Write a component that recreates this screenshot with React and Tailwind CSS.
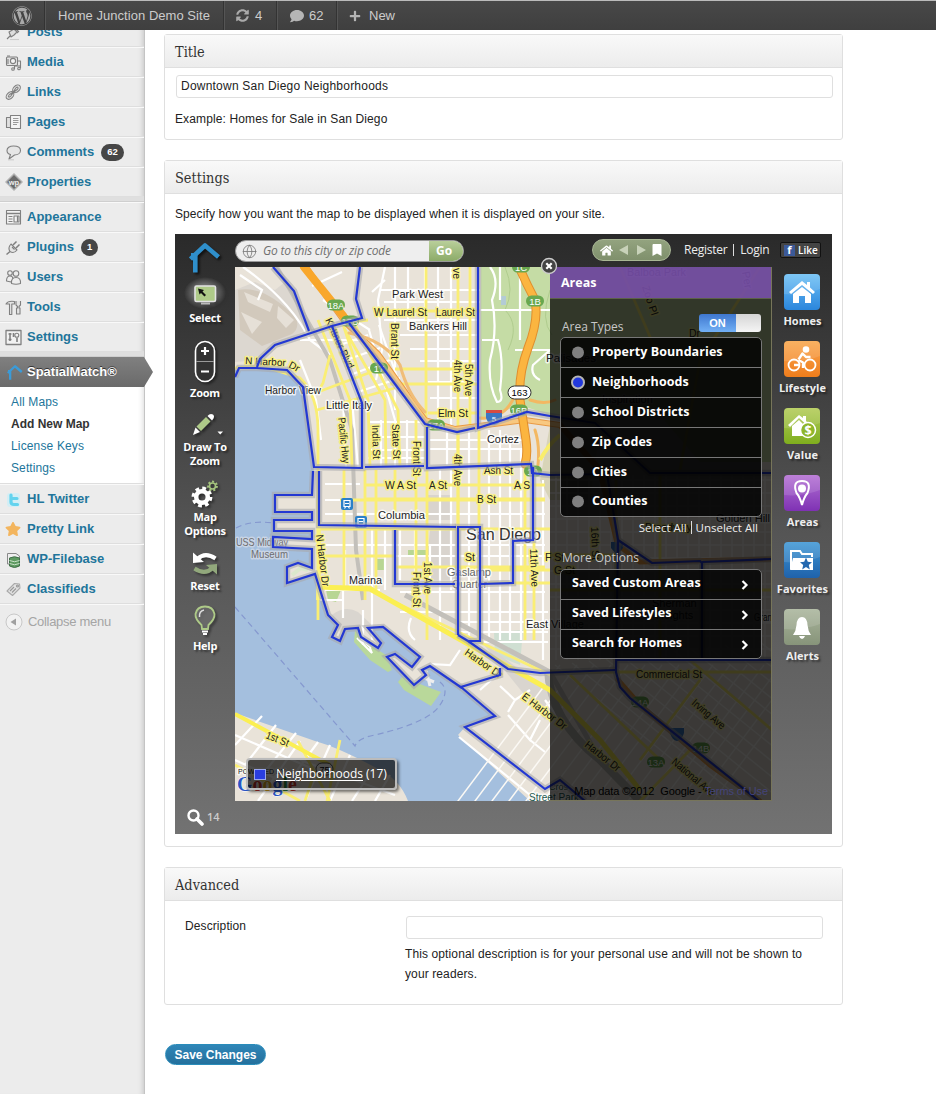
import React from "react";
import { FaWordpress, FaSyncAlt, FaComment, FaPlus, FaHome, FaBookmark, FaStar } from "react-icons/fa";
import { Globe } from "lucide-react";

function HouseLogo({ size, color, className }) {
  return (
    <svg width={size} height={size} viewBox="0 0 32 32" className={className} fill="none" stroke={color}>
      <path d="M6.300 31.500V13" strokeWidth="4.600" />
      <path d="M1.500 18L16 4.500L29.500 16" strokeWidth="4.600" strokeLinejoin="round" />
      <path d="M2 13.500H6" strokeWidth="3" />
    </svg>
  );
}

/* ---------- sidebar ---------- */

function MenuRow({ icon, label, badge }) {
  return (
    <div className="flex h-[30px] items-center border-t border-b border-t-[#f9f9f9] border-b-[#dedede] pl-[5px]">
      <span className="flex w-[22px] items-center text-[#7c7c7c]">{icon}</span>
      <span className="text-[13px] leading-[18px] font-bold text-[#21759b]">{label}</span>
      {badge && (
        <span className="ml-[7px] flex h-[17px] min-w-[17px] items-center justify-center rounded-full bg-[#464646] px-[6px] text-[9.5px] font-bold text-white">{badge}</span>
      )}
    </div>
  );
}

const Divider = () => <div className="h-[5px] border-b border-[#cfcfcf] bg-[#dfdfdf]" />;

const Glyph = ({ children }) => (
  <svg width="17" height="17" viewBox="0 0 17 17" fill="none" stroke="#808080" strokeWidth="1.100" strokeLinejoin="round">{children}</svg>
);

const ICONS = {
  posts: <Glyph><path d="M8 4L13 9M9 3L14 8M12 8L9 11L6 13L4 8L9 5M6 11L2 15" fill="#ddd" /><path d="M5 15.500H14" stroke="#ccc" /></Glyph>,
  media: <Glyph><rect x="1.500" y="3" width="11" height="8.500" rx="1" fill="#e4e4e4" /><circle cx="8" cy="7" r="2.600" fill="#f4f4f4" /><path d="M3 5V10M2 2H5" /><path d="M9.500 15V11.500M15.500 14V7H13" /><circle cx="8" cy="15" r="1.300" /><circle cx="14" cy="14.500" r="1.300" /><path d="M9.500 12H15" /></Glyph>,
  links: <Glyph><ellipse cx="11.500" cy="4.800" rx="4.500" ry="3" transform="rotate(-45 11.500 4.800)" fill="#e0e0e0" /><ellipse cx="11.500" cy="4.800" rx="2" ry="1" transform="rotate(-45 11.500 4.800)" fill="#f6f6f6" /><ellipse cx="5" cy="11.500" rx="4.500" ry="3" transform="rotate(-45 5 11.500)" fill="#e0e0e0" /><ellipse cx="5" cy="11.500" rx="2" ry="1" transform="rotate(-45 5 11.500)" fill="#f6f6f6" /><path d="M6 10.500L10.500 6" strokeWidth="2.200" /></Glyph>,
  pages: <Glyph><path d="M6 13.500H1.500V3.500H5" fill="#e0e0e0" /><rect x="5.500" y="1.500" width="10" height="13" fill="#f4f4f4" /><path d="M8 4.500H13.500M8 6.500H13.500M8 8.500H13.500M8 10.500H12" stroke="#999" /></Glyph>,
  comments: <Glyph><path d="M8.500 2C13 2 15.500 4 15.500 6.500C15.500 9 13 11 9.500 11L4 15L5.500 10.500C3 10 2 8.500 2 6.500C2 4 4.500 2 8.500 2Z" fill="#e6e6e6" /><path d="M3 15.800H9" stroke="#ccc" /></Glyph>,
  appearance: <Glyph><rect x="1.500" y="1.500" width="14" height="13.500" fill="#f2f2f2" /><path d="M1.500 4.500H15.500" strokeWidth="1.500" /><path d="M3.500 7.500H7.500M3.500 10H7.500M3.500 12.500H7.500M12.500 7V13" strokeWidth="1.200" /><rect x="9" y="7" width="5" height="6" /></Glyph>,
  plugins: <Glyph><path d="M6 5L12 11Q9 15 5 12.500Q2.500 9 6 5Z" fill="#e4e4e4" /><path d="M8 6L11.500 2.500M11 9L14.500 5.500M5 12.500L1.500 15.500" strokeWidth="1.500" /><path d="M7 8L9.500 10.500" /></Glyph>,
  users: <Glyph><circle cx="5" cy="4" r="2.300" fill="#eee" /><path d="M1.500 12Q1.500 7 5 7Q8 7 8 10L6 13Z" fill="#eee" /><circle cx="11" cy="4.500" r="2.800" fill="#eee" /><path d="M6.500 14.500Q6 8.500 11 8.500Q16 8.500 15.500 14.500Q11 16 6.500 14.500Z" fill="#eee" /></Glyph>,
  tools: <Glyph><path d="M1 5Q3 1.500 9.500 2.500V5H6.800V15.500H4.500V5Z" fill="#e4e4e4" /><path d="M11 2V6L12.500 7.500V9H11.500V15H15V9H14V7.500L15.500 6V2" fill="#e4e4e4" /></Glyph>,
  settings: <Glyph><rect x="1" y="1.500" width="15" height="14" fill="#f2f2f2" strokeWidth="1.300" /><path d="M5 4V12M3.500 10.500H6.500M12 9V13M8.500 4V8" strokeWidth="1.600" /><circle cx="11.800" cy="6.300" r="2" /><path d="M3.500 5H6.500" strokeWidth="1.500" /></Glyph>,
  twitter: <svg width="17" height="17" viewBox="0 0 17 17"><rect x="2" y="2" width="13" height="14" rx="3" fill="#d3eef5" /><path d="M6 4V11Q6 13.500 9 13.500H12.500M6 7.500H12" fill="none" stroke="#63d3ee" strokeWidth="3.200" strokeLinecap="round" /></svg>,
  filebase: <svg width="17" height="17" viewBox="0 0 17 17"><path d="M2.500 13V2.500H11L14.500 5V13Z" fill="#eee" stroke="#888" /><path d="M4.500 7V15Q9.500 18 14.500 15V7Q9.500 4.500 4.500 7Z" fill="#5d9a60" stroke="#41704a" /><path d="M4.500 9.500Q9.500 12 14.500 9.500M4.500 12.500Q9.500 15 14.500 12.500" fill="none" stroke="#c8e0c8" /></svg>,
  tag: <Glyph><path d="M2 10L9.500 2.500L14.500 3L15 7L7.500 14.500Z" fill="#e2e2e2" stroke="#aaa" /><path d="M5 10L9 6M7 11.500L11 7.500" stroke="#999" /><circle cx="12.500" cy="5" r="1" stroke="#999" /></Glyph>,
};

function Sidebar() {
  return (
    <aside className="relative w-[145px] shrink-0 overflow-visible border-r border-[#c4c4c4] bg-[#ececec] shadow-[inset_-6px_0_6px_-6px_rgba(0,0,0,0.22)]">
      <div className="-mt-[13px]">
        <MenuRow icon={ICONS.posts} label="Posts" />
        <MenuRow icon={ICONS.media} label="Media" />
        <MenuRow icon={ICONS.links} label="Links" />
        <MenuRow icon={ICONS.pages} label="Pages" />
        <MenuRow icon={ICONS.comments} label="Comments" badge="62" />
        <MenuRow
          icon={
            <svg width="18" height="18" viewBox="0 0 18 18">
              <path d="M0 9L9 0L18 9L9 18Z" fill="#b0b0b0" />
              <path d="M9 2L16 9L9 16L2 9Z" fill="#6a6a6a" />
              <text x="9" y="11.500" fontSize="7.500" fill="#eee" textAnchor="middle" fontFamily="Liberation Sans" fontWeight="bold">wp</text>
            </svg>
          }
          label="Properties"
        />
        <Divider />
        <MenuRow icon={ICONS.appearance} label="Appearance" />
        <MenuRow icon={ICONS.plugins} label="Plugins" badge="1" />
        <MenuRow icon={ICONS.users} label="Users" />
        <MenuRow icon={ICONS.tools} label="Tools" />
        <MenuRow icon={ICONS.settings} label="Settings" />
        <Divider />
      </div>
      <div className="relative z-10 flex h-[30px] items-center bg-gradient-to-b from-[#808080] to-[#6a6a6a] pl-[7px]">
        <HouseLogo size={16} color="#3b9bd8" className="shrink-0" />
        <span className="ml-1 text-[13px] font-bold text-white [text-shadow:0_-1px_0_#333]">SpatialMatch®</span>
        <svg width="10" height="30" viewBox="0 0 10 30" className="absolute top-0 left-full">
          <defs><linearGradient id="arrow" x2="0" y2="1"><stop stopColor="#808080" /><stop offset="1" stopColor="#6a6a6a" /></linearGradient></defs>
          <path d="M0 0L9 15L0 30Z" fill="url(#arrow)" />
        </svg>
      </div>
      <div className="flex h-[97px] flex-col border-b border-[#dedede] bg-white pt-[4px] pl-[11px] text-[12px] leading-[22px] text-[#21759b] shadow-[inset_-6px_0_6px_-6px_rgba(0,0,0,0.2)]">
        <span className="tracking-[0.15px]">All Maps</span>
        <span className="font-bold text-[#333]">Add New Map</span>
        <span className="tracking-[0.15px]">License Keys</span>
        <span className="tracking-[0.1px]">Settings</span>
      </div>
      <MenuRow icon={ICONS.twitter} label="HL Twitter" />
      <MenuRow icon={<FaStar size={16} color="#f3b55e" />} label="Pretty Link" />
      <MenuRow icon={ICONS.filebase} label="WP-Filebase" />
      <MenuRow icon={ICONS.tag} label="Classifieds" />
      <div className="flex h-[34px] items-center border-t border-[#f9f9f9] pl-[5px]">
        <svg width="18" height="18" viewBox="0 0 18 18"><circle cx="9" cy="9" r="8" fill="#f2f2f2" stroke="#c8c8c8" /><path d="M11 5.500V12.500L5.500 9Z" fill="#a0a0a0" /></svg>
        <span className="ml-[5px] text-[13px] tracking-[-0.3px] text-[#a5a5a5]">Collapse menu</span>
      </div>
    </aside>
  );
}

/* ---------- map ---------- */

const WATER =
  "M235 370L258 369L286 371L303 386L309 430L314 467L312 495L275 495L275 511L312 512L312 520L274 521L274 531L312 531L312 539L273 537L273 548L312 549L312 568L298 563L287 567L287 583L314 574L328 615L337 625L332 637L340 641L345 629L358 628L361 637L378 648L381 643L368 628L383 627L420 657L412 667L395 654L387 657L414 685L426 675L422 670L430 666L461 687L495 716L465 727L458 735L530 801L408 801Q400 780 380 770Q340 748 315 741L235 713Z";

const WHITE = [
  "M395 267V410M408 267V330M425 267V330M438 267V420M451 267V425M470 267V425M380 290L480 290M384 302H480M384 320H478M400 335H478M410 349H478M420 361H478M428 382H478M430 398H478",
  "M372 340H300M480 310H550M482 340H498Q504 360 500 390Q504 402 497 402Q488 385 490 360Q498 330 492 300Q500 280 490 267",
  "M440 470V640M447 428V465M451 470V590M469 430V640M489 430V640M500 430V640M510 440V640M521 450V640M543 480V660",
  "M325 500H545M325 514H545M325 545H545M325 556H545M400 567H545M400 592H545M400 612H548M460 622H548M460 632H548M484 642H548M430 449H525M430 440H525M325 484H360",
  "M320 545H395M345 550V590M372 530V640M385 530V590M325 590H380M343 590V618M363 610V645M400 530V580M415 530V580M430 545V585M320 600L343 600",
  "M240 275L262 290L258 300M300 360L316 400L321 440M343 400L346 467M352 400L358 467M323 300L370 330M312 286L342 272M340 345L368 335M346 360L380 348M350 375L390 360M358 392L400 378M369 330L395 420M379 325L405 400M330 320L362 408",
  "M243 267Q290 300 310 340L330 355M385 267L378 300L382 350L376 380M385 280L372 292",
  "M368 422H425M368 437H425M368 450H425M368 458H425M381 420V467M395 420V467M407 420V467",
  "M411 618Q405 632 415 640M430 664L450 665L460 650M500 686L515 700L530 690M515 700L508 712M480 690L500 672M508 715L530 740L540 720M530 740L545 752M459 737L530 795M545 700L560 720",
  "M235 745L262 716M245 765L276 725M262 775L296 733M290 780L318 742M235 735L320 772M235 760L290 785M258 801L300 741M305 801L330 745M330 801L350 755M352 801L372 770M375 801L390 775M300 760L395 795",
  "M520 267V340M500 267V300M540 380Q530 375 533 365L550 350M515 350H550",
];

const YELLOW = [
  "M426 267V465M458 267V640M470 267V425M235 368L262 366L300 378Q318 395 318 430V620M368 320L350 322M374 311H480M395 369H478M390 384H478",
  "M428 413H480M344 470V590M365 470V600M376 470V590M416 420V600M427 470V640M458 430V640M479 430V640M365 485H545M340 500H545M365 499H545M320 529H550M320 556H395M395 567H545M460 570H550M460 583H550M318 587H370L390 600L550 675",
  "M330 355L323 383L318 392M318 392L390 365M317 410L395 388M335 300L368 400L370 467M345 330L385 400L386 467M355 325L398 410L400 467M318 320L350 400L352 467",
  "M427 440V465M525 430V640M534 540V640M395 470V530",
  "M235 714L320 760M298 741L330 801M235 765L300 801M312 780L305 801M340 740L327 801",
];

function Txt({ x, y, s = 11, r, o, c = "#222", halo = "#fff", children, len }) {
  return (
    <text x={x} y={y} fontSize={s} fill={c} textLength={len} lengthAdjust="spacingAndGlyphs"
      transform={r ? `rotate(${r} ${x} ${y})` : undefined} stroke={halo} strokeWidth={halo === "none" ? 0 : 3} strokeOpacity={o || 0.75} paintOrder="stroke" strokeLinejoin="round">
      {children}
    </text>
  );
}

const BORDERS = [
  "M273 267L294 291L309 331",
  "M235 377L239 368L257 368L287 370L303 387L314 467L362 468V403L332 326L275 345L260 359L257 367",
  "M332 326L362 318L356 299L360 267",
  "M349 323L425 424L457 432L475 428",
  "M478 267V428L527 412L550 416L595 423L650 473H772",
  "M365 467L424 466",
  "M427 427V468L531 464L532 473L550 475L607 474L618 540L652 563L700 561L702 563V660",
  "M313 471L312 495H275V512H312V520H274V531H312V539L273 537V547L312 549V568L298 563L287 567V583L315 574L328 615L338 625L332 637L340 641L345 629L358 628L361 637L378 648L381 643L368 628L383 627L420 657L412 667L395 654L387 657L414 685L426 675L422 670L430 666L462 688",
  "M319 471V525L456 527",
  "M458 635V527H480V641H468",
  "M395 530V584L455 584",
  "M481 584L513 583V541L533 540V467",
  "M458 635L468 641L508 669L540 673L615 670",
  "M500 668V675L461 687L495 716L465 727L545 789L560 780L585 801",
  "M618 540L616 672L620 687L630 698L759 801",
  "M702 562L772 559M616 660H772",
];

const Exit = ({ x, y, children }) => (
  <g><rect x={x - 9} y={y - 5.5} width="18" height="11" rx="5.5" fill="#69a84f" /><text x={x} y={y + 3.5} fontSize="9.5" fill="#fff" textAnchor="middle">{children}</text></g>
);

const Train = ({ x, y }) => (
  <g transform={`translate(${x} ${y})`}><rect width="12" height="12" rx="2" fill="#2b80c8" /><path d="M3 2.5H9V8.5H3ZM3.5 10.5L4.5 9M8.5 10.5L7.5 9" stroke="#fff" fill="none" strokeWidth="1.2" /><path d="M4 5.5H8" stroke="#fff" /></g>
);

function MapCanvas() {
  const diag = [];
  for (let i = 0; i < 16; i++) {
    diag.push(`M${560 + i * 17} 665L${440 + i * 17} 825`);
    diag.push(`M${555 + i * 17} ${665 - i * 2}L${760 + i * 17} ${830 - i * 2}`);
  }
  const east = [];
  for (let i = 0; i < 20; i++) {
    east.push(`M${556 + i * 11} 475V660`);
    if (i < 14) east.push(`M550 ${480 + i * 13}H772`);
  }
  return (
    <svg width="537" height="534" viewBox="235 267 537 534" className="block" fontFamily="Liberation Sans, Arial, sans-serif">
      <rect x="235" y="267" width="537" height="534" fill="#e9e3d9" />
      <path d="M235 290L255 282L275 290L285 282L300 310L306 330L275 345L258 360L235 362Z" fill="#dcd7d0" />
      <path d="M238 290Q265 285 296 318Q300 328 292 334L262 346L240 330Z" fill="#d2c9bc" />
      <path d="M244 292L273 304L270 312L248 302ZM241 312L262 322L252 334ZM278 306L294 320L286 328L277 318Z" fill="#e6e0d7" />
      <path d="M481 267H772V462H700L660 415H550L520 405L481 420Z" fill="#c5dca5" />
      <path d="M505 267Q515 290 505 310Q520 325 508 350M550 290Q540 320 552 335" fill="none" stroke="#b0cc8e" />
      <rect x="501" y="296" width="5" height="9" fill="#b3cbd5" />
      <path d="M550 425L540 480L550 500H590L600 430Z" fill="#d8d4b8" />
      <path d="M430 530H455V580H425ZM428 495H452V520H428Z" fill="#d9d4ce" />
      <path d="M376 559H386V570H376ZM326 590L341 590L336 602L328 600ZM408 550H426V556H408Z" fill="#b8d694" />
      <path d="M494 632L523 630L520 665L495 655Z" fill="#cfdfd2" />
      <path d="M332 615Q345 605 358 612L372 625L340 632ZM480 640L560 700L545 720Z" fill="#d9d5cf" />
      <path d={WATER} fill="#a4bfde" />
      <path d="M355 630L362 640L386 655L392 670L388 672L370 660L354 642ZM402 677L430 688L441 692L431 706L404 690L398 682Z" fill="#b9d89a" />
      <path d="M357 638L372 653L370 648M361 639L371 648" stroke="#fff" strokeWidth="2" fill="none" />
      <path d="M292 575L301 568L308 570" stroke="#dbe8cc" strokeWidth="4" fill="none" />
      <path d="M420 676L434 682M426 670L430 686" stroke="#eee" strokeWidth="3" />
      <path d="M236 528Q250 520 275 523M235 607L355 746Q358 738 375 735Q430 722 440 705Q450 690 440 682" fill="none" stroke="#8598cf" strokeWidth="1.2" strokeDasharray="6 4" />

      <g fill="none" stroke="#fff" strokeWidth="2.2">{WHITE.map((d) => <path key={d} d={d} />)}</g>
      <g fill="none" stroke="#fbf9f5" strokeWidth="1.5">{east.map((d) => <path key={d} d={d} />)}{diag.map((d) => <path key={d} d={d} />)}</g>
      <path d={WATER} fill="none" />
      <g fill="none" stroke="#c3c0ba">
        <path d="M277 267L307 320L330 360L352 430L356 550L363 600" strokeWidth="4" />
        <path d="M405 595L550 672L600 760" strokeWidth="5" />
        <path d="M548 670Q550 720 600 760L640 801" strokeWidth="8" stroke="#b9b6b0" />
      </g>
      <g fill="none" stroke="#faee74" strokeWidth="2.8">{YELLOW.map((d) => <path key={d} d={d} />)}
        <path d="M550 672H772M570 675L660 760M640 760L700 680M550 590H772M550 555H616M690 660L772 730M640 801L690 750M616 480V660M660 475V660M620 267L660 360M760 267L700 360L680 470" />
      </g>
      <path d="M318 600Q320 560 318 500" stroke="#fbf27c" strokeWidth="4" fill="none" />
      <path d="M318 587L370 589L395 603L550 690L600 740L640 790" fill="none" stroke="#fbef52" strokeWidth="5" />
      <path d="M235 714L330 765" fill="none" stroke="#fbef52" strokeWidth="4" />

      <g fill="none" strokeLinecap="round">
        <path d="M306 267L326 296L345 322L378 354L425 420L455 429L525 420L560 425L600 470L618 545" stroke="#e89a45" strokeWidth="6" />
        <path d="M306 267L326 296L345 322L378 354L425 420L455 429L525 420L560 425" stroke="#f8c880" strokeWidth="4" />
        <path d="M304 267L345 318" stroke="#f9a72b" strokeWidth="8" />
        <path d="M349 333Q385 340 400 365Q408 395 425 412" stroke="#f0bd78" strokeWidth="3" />
        <path d="M519 267Q527 285 535 300Q539 320 528 348Q518 375 520 400L526 440Q528 455 525 464" stroke="#e08e2e" strokeWidth="9" />
        <path d="M519 267Q527 285 535 300Q539 320 528 348Q518 375 520 400L526 440Q528 455 525 464" stroke="#fbb540" strokeWidth="7" />
        <path d="M515 395Q505 420 480 418M530 400Q545 405 555 400M535 430Q540 445 538 465" stroke="#f3b862" strokeWidth="3" />
        <path d="M618 545L640 562L772 559M618 680L640 705L710 765L760 801" stroke="#e89a45" strokeWidth="5" />
      </g>
      <path d="M540 460Q548 445 560 435" stroke="#f9ee6b" strokeWidth="4" fill="none" />

      <Exit x={336} y={305}>18A</Exit><Exit x={535} y={301}>1B</Exit><Exit x={521} y={267}>1C</Exit><Exit x={350} y={321}>17B</Exit>
      <Exit x={436} y={425}>17A</Exit><Exit x={519} y={410}>16B</Exit><Exit x={379} y={368}>17</Exit><Exit x={533} y={471}>1A</Exit>
      <Exit x={640} y={702}>14A</Exit><Exit x={656} y={762}>13A</Exit><Exit x={701} y={748}>14B</Exit>
      <rect x="508" y="386" width="23" height="13" rx="6.5" fill="#fff" stroke="#333" /><text x="519.500" y="396" fontSize="9.500" textAnchor="middle">163</text>
      <path d="M486 410H502V418Q500 424 494 425Q488 424 486 418Z" fill="#3b77c4" /><path d="M486 410H502V413H486Z" fill="#d64b42" /><text x="494" y="421.500" fontSize="8" fill="#fff" textAnchor="middle">5</text>
      <path d="M670 728H684V733Q682 740 677 741Q672 740 670 733ZM611 542H623V548L617 555L611 548Z" fill="#3b77c4" />
      <rect x="316" y="763" width="17" height="12" rx="6" fill="#fff" stroke="#555" /><text x="324.500" y="772.500" fontSize="9" textAnchor="middle">75</text>
      <Train x={341} y={498} /><Train x={355} y={516} />

      <Txt x={392} y={298} len={51}>Park West</Txt>
      <Txt x={374} y={315.500} halo="#fbf27c" o={0.9} len={53}>W Laurel St</Txt>
      <Txt x={436} y={315.500} halo="#fbf27c" o={0.9} len={39}>Laurel St</Txt>
      <Txt x={409} y={330} len={58}>Bankers Hill</Txt>
      <Txt x={391} y={323} r={90} s={10.5} halo="#fbf27c" o={0.9} len={36}>Brant St</Txt>
      <Txt x={453} y={268} r={90} s={10.5} halo="#fbf27c" len={11}>ve</Txt>
      <Txt x={454} y={360} r={90} s={10.5} halo="#fbf27c" o={0.9} len={32}>4th Ave</Txt>
      <Txt x={465} y={364} r={90} s={10.5} halo="#fbf27c" o={0.9} len={32}>5th Ave</Txt>
      <Txt x={438} y={417} s={10.5} halo="#fbf27c" o={0.9} len={30}>Elm St</Txt>
      <Txt x={487} y={443} len={32}>Cortez</Txt>
      <Txt x={265} y={394} len={56}>Harbor View</Txt>
      <Txt x={326} y={409} len={46}>Little Italy</Txt>
      <Txt x={245} y={364} r={3} s={10} halo="#fbf27c" o={0.9}>N Harbor</Txt>
      <Txt x={288} y={367} r={28} s={10} halo="#fbf27c" o={0.9}>Dr</Txt>
      <Txt x={325} y={320} r={65} s={10} halo="#fbf27c">Kettner Blvd</Txt>
      <Txt x={338} y={418} r={84} s={10.5} halo="#fbf27c" o={0.9} len={46}>Pacific Hwy</Txt>
      <Txt x={372} y={425} r={88} s={10.5} halo="#fbf27c" o={0.9} len={34}>India St</Txt>
      <Txt x={392} y={424} r={88} s={10.5} halo="#fbf27c" o={0.9} len={35}>State St</Txt>
      <Txt x={413} y={441} r={90} s={10.5} halo="#fbf27c" o={0.9} len={35}>Front St</Txt>
      <Txt x={454} y={454} r={90} s={10.5} halo="#fbf27c" o={0.9} len={32}>4th Ave</Txt>
      <Txt x={484} y={474} s={10.5} halo="#fbf27c" o={0.9} len={29}>Ash St</Txt>
      <Txt x={385} y={489} s={10.5} halo="#fbf27c" o={0.9} len={31}>W A St</Txt>
      <Txt x={429} y={489} s={10.5} halo="#fbf27c" o={0.9} len={18}>A St</Txt>
      <Txt x={514} y={489} s={10.5} halo="#fbf27c" o={0.9}>A S</Txt>
      <Txt x={477} y={503} s={10.5} halo="#fbf27c" o={0.9} len={19}>B St</Txt>
      <Txt x={378} y={519} len={47}>Columbia</Txt>
      <Txt x={466} y={540} s={16} len={75} c="#333">San Diego</Txt>
      <Txt x={465} y={561} s={10.5} halo="#fbf27c" o={0.9}>St</Txt>
      <Txt x={447} y={576} c="#666" len={44}>Gaslamp</Txt>
      <Txt x={452} y={588} c="#666" len={35}>Quarter</Txt>
      <Txt x={349} y={584} len={33}>Marina</Txt>
      <Txt x={316} y={535} r={83} s={10.5} halo="#fbf27c" o={0.9} len={52}>N Harbor Dr</Txt>
      <Txt x={424} y={562} r={90} s={10.5} halo="#fbf27c" o={0.9} len={32}>1st Ave</Txt>
      <Txt x={413} y={572} r={90} s={10.5} halo="#fbf27c" o={0.9} len={35}>Front St</Txt>
      <Txt x={530} y={549} r={88} s={10.5} halo="#fbf27c" o={0.9} len={38}>11th Ave</Txt>
      <Txt x={545} y={561} s={10.5} halo="#fbf27c" o={0.9}>F St</Txt>
      <Txt x={554} y={574} s={10.5} halo="#fbf27c" o={0.9}>G St</Txt>
      <Txt x={526} y={628} len={58}>East Village</Txt>
      <Txt x={236} y={546} c="#6d6d70" halo="#d5dce8" len={52}>USS Midway</Txt>
      <Txt x={251} y={557.500} c="#6d6d70" halo="#d5dce8" len={37}>Museum</Txt>
      <Txt x={464} y={654} r={35} s={10.5} halo="#fbf27c" o={0.9} len={43}>Harbor Dr</Txt>
      <Txt x={521} y={698} r={37} s={10.5} halo="#fbf27c" o={0.9} len={53}>E Harbor Dr</Txt>
      <Txt x={265} y={738} r={21} s={10.5} halo="#fbf27c" o={0.9} len={24}>1st St</Txt>
      <Txt x={529} y={800.500} s={10} c="#24594f">Street Park</Txt>
      <Txt x={549} y={790} s={9} c="#24594f">Cros</Txt>
      <Txt x={546} y={362} len={50}>Palisades</Txt>
      <Txt x={627} y={276} len={59}>Balboa Park</Txt>
      <Txt x={742} y={272} r={80}>Per</Txt>
      <Txt x={642} y={287} r={72} s={10.5} halo="#fbf27c">Zoo Pl</Txt>
      <Txt x={689} y={337} s={10.5} halo="#fbf27c" o={0.5}>Dr</Txt>
      <Txt x={602} y={403} c="#333">Inspiration</Txt>
      <Txt x={716} y={522} len={54}>Golden Hill</Txt>
      <Txt x={645} y={531} s={10.5} halo="#fbf27c">Broadway</Txt>
      <Txt x={591} y={527} r={88} s={10.5} halo="#fbf27c">16th St</Txt>
      <Txt x={652} y={607}>Sherman</Txt><Txt x={656} y={619}>Heights</Txt><Txt x={754} y={621} len={18}>Gran</Txt>
      <Txt x={636} y={678} s={10.5} halo="#fbf27c" len={66}>Commercial St</Txt>
      <Txt x={691} y={704} r={40} s={10.5} halo="#fbf27c" len={40}>Irving Ave</Txt>
      <Txt x={584} y={746} r={38} s={10.5} halo="#fbf27c" len={42}>Harbor Dr</Txt>
      <Txt x={671} y={763} r={40} s={10.5} halo="#fbf27c" len={52}>National Ave</Txt>
      <Txt x={238} y={774} s={7}>POWERED BY</Txt>
      <g fontFamily="Liberation Serif, serif" fontSize="22" fontWeight="bold" stroke="#fff" strokeWidth="1" paintOrder="stroke">
        <text x="237" y="791" textLength="60" lengthAdjust="spacingAndGlyphs"><tspan fill="#2a56c6">G</tspan><tspan fill="#c6372d">o</tspan><tspan fill="#e0a91f">o</tspan><tspan fill="#2a56c6">g</tspan><tspan fill="#2f8a3c">l</tspan><tspan fill="#c6372d">e</tspan></text>
      </g>

      <g fill="none" strokeLinejoin="miter">
        {BORDERS.map((d) => <path key={d} d={d} stroke="#a9a9ac" strokeOpacity="0.6" strokeWidth="6.500" />)}
        {BORDERS.map((d) => <path key={d + "b"} d={d} stroke="#2338d2" strokeWidth="2.200" />)}
      </g>
    </svg>
  );
}

/* ---------- areas panel ---------- */

const AREAS = ["Property Boundaries", "Neighborhoods", "School Districts", "Zip Codes", "Cities", "Counties"];
const MORE = [["Saved Custom Areas", "tracking-[0.12px]"], ["Saved Lifestyles", ""], ["Search for Homes", ""]];

function AreasPanel() {
  return (
    <div className="absolute top-0 left-[315px] h-[534px] w-[222px] border-r border-b border-[#77755a] bg-black/75">
      <svg width="18" height="18" viewBox="0 0 18 18" className="absolute -top-[10px] -left-[10px]"><circle cx="9" cy="9" r="7.500" fill="#444" stroke="#ccc" strokeWidth="1.300" /><path d="M6.300 6.300L11.700 11.700M11.700 6.300L6.300 11.700" stroke="#fff" strokeWidth="2.200" /></svg>
      <div className="flex h-[32px] items-center border-b border-[#5c6148] bg-[#7c52b0]/85 pt-[2px] pl-[11px] text-[12.5px] font-bold text-white">Areas</div>
      <div className="flex h-[38px] items-end justify-between pr-[10px] pl-[12px]">
        <span className="text-[12px] leading-[20px] text-[#c8c8c8]">Area Types</span>
        <span className="mb-[5px] flex h-[18px] w-[62px] overflow-hidden rounded-[3px]">
          <span className="flex w-[37px] items-center justify-center bg-gradient-to-b from-[#3f77cf] to-[#72b0f5] font-[Liberation_Sans] text-[11px] font-bold text-white">ON</span>
          <span className="flex-1 bg-gradient-to-b from-[#d5d5d5] to-[#f5f5f5]" />
        </span>
      </div>
      <div className="mr-[9px] ml-[10px] rounded-[5px] border border-[#777] bg-black/80">
        {AREAS.map((a, i) => (
          <div key={a} className={"flex items-center pb-[1px] pl-[10px] text-[12.5px] font-bold tracking-[0.08px] text-white " + (i < 5 ? "h-[30px] border-b border-[#777]" : "h-[28px]")}>
            <svg width="15" height="15" viewBox="0 0 15 15">{i === 1 ? <circle cx="7" cy="7.500" r="6" fill="#2238dc" stroke="#b5b5b5" strokeWidth="2" /> : <circle cx="7" cy="7.500" r="6" fill="#808080" />}</svg>
            <span className="ml-[6px]">{a}</span>
          </div>
        ))}
      </div>
      <div className="flex h-[22px] items-center justify-end pr-[13px] pb-[1px] text-[11.5px] text-[#eee]">
        <span>Select All</span><span className="mx-[4px] h-[13px] w-px bg-[#ddd]" /><span>Unselect All</span>
      </div>
      <div className="flex h-[30px] items-end pb-[1px] pl-[12px] text-[12px] leading-[20px] text-[#c8c8c8]">More Options</div>
      <div className="mr-[9px] ml-[10px] rounded-[5px] border border-[#777] bg-black/80">
        {MORE.map(([m, cls], i) => (
          <div key={m} className={"flex items-center justify-between pr-[12px] pb-[2px] pl-[11px] text-[12.5px] font-bold text-white " + cls + (i < 2 ? " h-[30px] border-b border-[#777]" : " h-[28px]")}>
            <span>{m}</span>
            <svg width="8" height="10" viewBox="0 0 8 10" className="mt-[3px]"><path d="M1.500 1L5.500 5L1.500 9" fill="none" stroke="#fff" strokeWidth="2.200" /></svg>
          </div>
        ))}
      </div>
    </div>
  );
}

/* ---------- toolbars ---------- */

function Tool({ box, lines, children }) {
  return (
    <div className="flex w-full flex-col items-center">
      <div className={"flex items-end justify-center drop-shadow-[2px_2px_1px_rgba(0,0,0,0.4)] " + box}>{children}</div>
      {lines.map((l) => <span key={l} className="text-[11px] leading-[14px] font-bold tracking-[-0.25px] whitespace-nowrap text-white [text-shadow:2px_2px_2px_rgba(0,0,0,0.45)]">{l}</span>)}
    </div>
  );
}

function LeftTools() {
  return (
    <div className="flex w-[60px] shrink-0 flex-col items-center">
      <Tool box="h-[44px]" lines={["Select"]}>
        <svg width="44" height="34" viewBox="-2 -2 44 34"><defs><radialGradient id="glow"><stop stopColor="#fff" stopOpacity=".65" /><stop offset="1" stopColor="#fff" stopOpacity="0" /></radialGradient></defs>
          <ellipse cx="20" cy="14" rx="21" ry="16" fill="url(#glow)" /><rect x="10" y="7" width="20.500" height="15.500" rx="1.500" fill="#aeca88" stroke="#e2e2e2" strokeWidth="1.600" /><path d="M16 24.500H25" stroke="#bbb" strokeWidth="2" /><path d="M13 9.500L19 11L17.500 12.500L21 16L19.500 17.500L16 14L14.500 15.500Z" fill="#111" /></svg>
      </Tool>
      <Tool box="h-[61px] pb-[3px]" lines={["Zoom"]}>
        <svg width="23" height="43" viewBox="0 0 23 43"><rect x="1.500" y="1.500" width="19" height="40" rx="9.500" fill="#333" stroke="#fff" strokeWidth="1.600" /><path d="M2 21.500H20" stroke="#999" /><path d="M7 11H15M11 7V15M7 31.500H15" stroke="#fff" strokeWidth="2.200" /></svg>
      </Tool>
      <Tool box="h-[40px] pb-[4px]" lines={["Draw To", "Zoom"]}>
        <svg width="36" height="23" viewBox="0 0 36 23"><path d="M6 22L8.500 14.500L13 19Z" fill="#fff" /><path d="M9.500 13.500L19 4L23.500 8.500L14 18Z" fill="#aeca88" /><path d="M20.500 3Q23 0 26 1.500Q28.500 4 25 7.500Z" fill="#fff" /><path d="M30.500 18.500H36L33.200 21.500Z" fill="#fff" /></svg>
      </Tool>
      <Tool box="h-[42px] pb-[2px]" lines={["Map", "Options"]}>
        <svg width="28" height="28" viewBox="0 0 28 28"><circle cx="11" cy="17" r="5.800" fill="none" stroke="#fff" strokeWidth="4.500" /><circle cx="11" cy="17" r="8.700" fill="none" stroke="#fff" strokeWidth="3.400" strokeDasharray="3.700 3.133" /><circle cx="21.500" cy="6" r="3" fill="none" stroke="#a5c47e" strokeWidth="1.600" /><circle cx="21.500" cy="6" r="4.400" fill="none" stroke="#a5c47e" strokeWidth="2" strokeDasharray="2 1.950" /></svg>
      </Tool>
      <Tool box="h-[41px] pb-[3px]" lines={["Reset"]}>
        <svg width="28" height="25" viewBox="0 0 28 25"><path d="M6.500 8Q14 0.500 24.500 7.500" fill="none" stroke="#fff" strokeWidth="4" /><path d="M2 1.500V12L13 11Z" fill="#fff" /><path d="M21.500 17Q14 24.500 3.500 17.500" fill="none" stroke="#92a87c" strokeWidth="4" /><path d="M26 23.500V13L15 14Z" fill="#92a87c" /></svg>
      </Tool>
      <Tool box="h-[46px] pb-[3px]" lines={["Help"]}>
        <svg width="22" height="31" viewBox="-1 0 22 31"><path d="M7 24L6.500 20Q0 14 .5 9Q2 1.500 10 1.500Q18 1.500 19.500 9Q20 14 13.500 20L13 24Z" fill="#888" fillOpacity=".5" stroke="#aeca88" strokeWidth="1.800" /><path d="M4.500 12Q4 6 9 5" fill="none" stroke="#ddd" strokeWidth="1.500" /><path d="M7 26.500H13M8 29H12" stroke="#fff" strokeWidth="2" /></svg>
      </Tool>
    </div>
  );
}

const TILES = [
  ["Homes", "from-[#6cc0f5] to-[#2a86dc]", <g key="h" fill="#fff"><path d="M5 18L18 7L23 11V8H26V13.500L31 18L29 20L18 11L7 20Z" /><path d="M9 20L18 13L27 20V29H21V22H15V29H9Z" /></g>],
  ["Lifestyle", "from-[#f9a64b] to-[#ef7d1b]", <g key="l" fill="none" stroke="#fff" strokeWidth="1.800"><circle cx="10" cy="24" r="5.500" /><circle cx="26" cy="24" r="5.500" /><path d="M14.500 18.500L18.500 12.500L22 16H26.500M14.500 19L19 21.500V27M10 24H16" strokeWidth="2.400" strokeLinejoin="round" /><circle cx="22" cy="8.500" r="2.400" fill="#fff" /></g>],
  ["Value", "from-[#b2cb55] to-[#7fae1c]", <g key="v"><path d="M4 17L15 7L19 10V8H22V13L26 17L24 18L15 10L6 19ZM8 18L15 12L20 17V28H8Z" fill="#fff" /><circle cx="24" cy="22" r="7.500" fill="#8fb62c" stroke="#fff" strokeWidth="1.500" /><text x="24" y="26.500" fontSize="12.500" fill="#fff" fontWeight="bold" textAnchor="middle">$</text></g>],
  ["Areas", "from-[#b46fd3] to-[#7f31b4]", <g key="a"><path d="M18 30Q16 22 12.500 18Q8 6 18 6Q28 6 23.500 18Q20 22 18 30Z" fill="none" stroke="#fff" strokeWidth="2" /><circle cx="18" cy="13.500" r="4" fill="#fff" /></g>],
  ["Favorites", "from-[#3f97d5] to-[#1f62ab]", <g key="f"><path d="M7 27V9H16L18 12H28V15" fill="none" stroke="#fff" strokeWidth="2" /><path d="M9 16H29V28H6Z" fill="#fff" /><path d="M22 15.500L23.800 19.800L28 20.200L24.800 23L25.800 27.500L22 25L18.200 27.500L19.200 23L16 20.200L20.200 19.800Z" fill="#2468af" /></g>],
  ["Alerts", "from-[#aab59c] to-[#87947a]", <g key="b" fill="#fff"><path d="M9 26Q12 22 12.500 16Q13 8 18 8Q23 8 23.500 16Q24 22 27 26Z" /><path d="M15 27H21Q20 30 18 30Q16 30 15 27Z" /></g>],
];

function RightTools() {
  return (
    <div className="flex w-[60px] shrink-0 flex-col items-center pt-[7px]">
      {TILES.map(([name, grad, art]) => (
        <div key={name} className="flex h-[67px] flex-col items-center">
          <div className={"h-[36px] w-[36px] overflow-hidden rounded-[4px] bg-gradient-to-b " + grad}>
            <svg width="36" height="36" viewBox="0 0 36 36"><path d="M0 0H36V15Q18 22 0 20Z" fill="#fff" fillOpacity=".12" />{art}</svg>
          </div>
          <span className="mt-[4px] ml-px text-[11px] leading-[14px] font-bold tracking-[0.05px] text-[#eee] [text-shadow:2px_2px_2px_rgba(0,0,0,0.45)]">{name}</span>
        </div>
      ))}
    </div>
  );
}

function MapApp() {
  return (
    <div className="flex h-[600px] w-[657px] flex-col bg-gradient-to-b from-[#2a2a2a] via-[#555] to-[#727272] font-['Open_Sans','Noto_Sans',sans-serif]">
      <div className="flex h-[33px]">
        <div className="w-[60px] pt-[7px] pl-[14px]">
          <HouseLogo size={32} color="#2f8fcb" className="drop-shadow-[2px_2px_1px_rgba(0,0,0,0.6)]" />
        </div>
        <div className="mt-[6px] flex h-[22px] w-[229px] overflow-hidden rounded-full border border-[#999] bg-[#eee]">
          <div className="flex w-[193px] items-center pl-[6px]">
            <Globe size={15} strokeWidth={1.3} className="text-[#777]" />
            <span className="ml-[6px] text-[12px] tracking-[-0.2px] whitespace-nowrap text-[#707070] italic">Go to this city or zip code</span>
          </div>
          <div className="flex flex-1 items-center justify-center bg-gradient-to-b from-[#b9cf9a] to-[#8cab68] pr-1 text-[12px] font-bold text-white">Go</div>
        </div>
        <div className="mt-[5px] ml-[128px] flex h-[22px] w-[79px] items-center justify-between rounded-full border border-[#a9b795] bg-gradient-to-b from-[#93a37f] to-[#7f906c] px-[7px]">
          <FaHome size={13} color="#fff" />
          <svg width="27" height="10" viewBox="0 0 27 10"><path d="M9 0V10L0 5ZM18 0V10L27 5Z" fill="#c8d2b9" /></svg>
          <FaBookmark size={12} color="#fff" />
        </div>
        <div className="ml-[13px] flex h-[31px] w-[96px] items-center text-[12px] tracking-[-0.25px] whitespace-nowrap text-[#eee]">
          Register<span className="mx-[6px] h-[12px] w-px bg-[#ddd]" />Login
        </div>
        <div className="mt-[8px] flex h-[16px] w-[41px] items-center rounded-[2px] border border-[#111] bg-[#444] pl-[3px]">
          <span className="flex h-[11px] w-[11px] items-end justify-center bg-[#3b5998] text-[11px] leading-[12px] font-bold text-white">f</span>
          <span className="ml-[3px] text-[10px] font-semibold text-white">Like</span>
        </div>
      </div>
      <div className="flex h-[534px]">
        <LeftTools />
        <div className="relative w-[537px] shrink-0">
          <MapCanvas />
          <div className="absolute bottom-[11px] left-[11px] flex h-[32px] w-[151px] items-center rounded-[4px] border-2 border-[#bbb] bg-black/70 pl-[6px] text-[12px] whitespace-nowrap text-white shadow-[2px_2px_3px_rgba(0,0,0,0.5)]">
            <span className="h-[11px] w-[12px] border border-[#9aa6ee] bg-[#2a3ee0]" />
            <span className="ml-[10px] underline underline-offset-2">Neighborhoods</span>
            <span className="ml-[3px]">(17)</span>
          </div>
          <AreasPanel />
          <span className="absolute right-[4px] bottom-[2px] font-[Liberation_Sans] text-[11px] tracking-[-0.1px] whitespace-pre text-black">{"Map data ©2012  Google - "}<span className="text-[#44447a]">Terms of Use</span></span>
        </div>
        <RightTools />
      </div>
      <div className="flex h-[33px] items-center pl-[12px]">
        <svg width="17" height="17" viewBox="0 0 17 17"><circle cx="6.500" cy="6.500" r="5" fill="none" stroke="#fff" strokeWidth="2.400" /><path d="M10 10L15 15" stroke="#fff" strokeWidth="3.600" strokeLinecap="round" /></svg>
        <span className="ml-[3px] text-[11px] font-semibold text-[#ccc]">14</span>
      </div>
    </div>
  );
}

/* ---------- page ---------- */

function Box({ title, className, children }) {
  return (
    <section className={"w-[679px] rounded-[3px] border border-[#dfdfdf] bg-white " + className}>
      <h3 className="flex h-[33px] items-center border-b border-[#dfdfdf] bg-gradient-to-b from-[#f9f9f9] to-[#ececec] pt-[3px] pl-[10px] font-['DejaVu_Serif_Condensed','DejaVu_Serif',serif] text-[14.4px] text-[#333]">{title}</h3>
      {children}
    </section>
  );
}

export default function App() {
  return (
    <div className="flex h-[1094px] w-[936px] flex-col overflow-hidden bg-white font-['Liberation_Sans',Arial,sans-serif] text-[12px] text-[#222]">
      <header className="relative z-20 flex h-[30px] shrink-0 items-stretch border-t border-[#bbb] bg-gradient-to-b from-[#484848] to-[#3f3f3f] text-[13px] text-[#ccc]">
        <div className="flex w-[45px] items-center justify-center border-r border-[#333]"><FaWordpress size={20} color="#aaa" /></div>
        <div className="flex w-[179px] items-center border-r border-l border-r-[#333] border-l-[#555] pl-[12px] tracking-[0.04px] whitespace-nowrap">Home Junction Demo Site</div>
        <div className="flex w-[53px] items-center gap-[6px] border-r border-l border-r-[#333] border-l-[#555] pl-[11px]"><FaSyncAlt size={13} color="#aaa" />4</div>
        <div className="flex w-[60px] items-center gap-[5px] border-r border-l border-r-[#333] border-l-[#555] pl-[12px]"><FaComment size={14} color="#b5b5b5" />62</div>
        <div className="flex items-center gap-[8px] border-l border-[#555] pl-[11px]"><FaPlus size={12} color="#b5b5b5" />New</div>
      </header>
      <div className="flex flex-1">
        <Sidebar />
        <main className="flex flex-col items-start pt-[4px] pl-[19px]">
          <Box title="Title" className="h-[106px]">
            <div className="pr-[9px] pl-[10px] pt-[7px]">
              <div className="ml-px flex h-[23px] items-center rounded-[3px] border border-[#dfdfdf] pb-[2px] pl-[4px] tracking-[0.22px]">Downtown San Diego Neighborhoods</div>
              <p className="mt-[11px] leading-[20px] tracking-[0.12px]">Example: Homes for Sale in San Diego</p>
            </div>
          </Box>
          <Box title="Settings" className="mt-[20px] h-[687px]">
            <div className="px-[10px] pt-[10px]">
              <p className="mb-[10px] leading-[20px] tracking-[0.09px]">Specify how you want the map to be displayed when it is displayed on your site.</p>
              <MapApp />
            </div>
          </Box>
          <Box title="Advanced" className="mt-[20px] h-[138px]">
            <div className="flex pt-[15px] pl-[20px]">
              <span className="w-[220px] leading-[20px] tracking-[0.1px]">Description</span>
              <div className="w-[418px]">
                <div className="ml-px h-[23px] rounded-[3px] border border-[#dfdfdf]" />
                <p className="mt-[5px] w-[410px] leading-[20px] tracking-[0.11px]">This optional description is for your personal use and will not be shown to your readers.</p>
              </div>
            </div>
          </Box>
          <button className="mt-[39px] ml-px flex h-[21px] w-[101px] items-center justify-center rounded-full border border-[#298cba] bg-gradient-to-b from-[#2f86b8] to-[#24709c] text-[12px] font-bold text-white">Save Changes</button>
        </main>
      </div>
    </div>
  );
}
